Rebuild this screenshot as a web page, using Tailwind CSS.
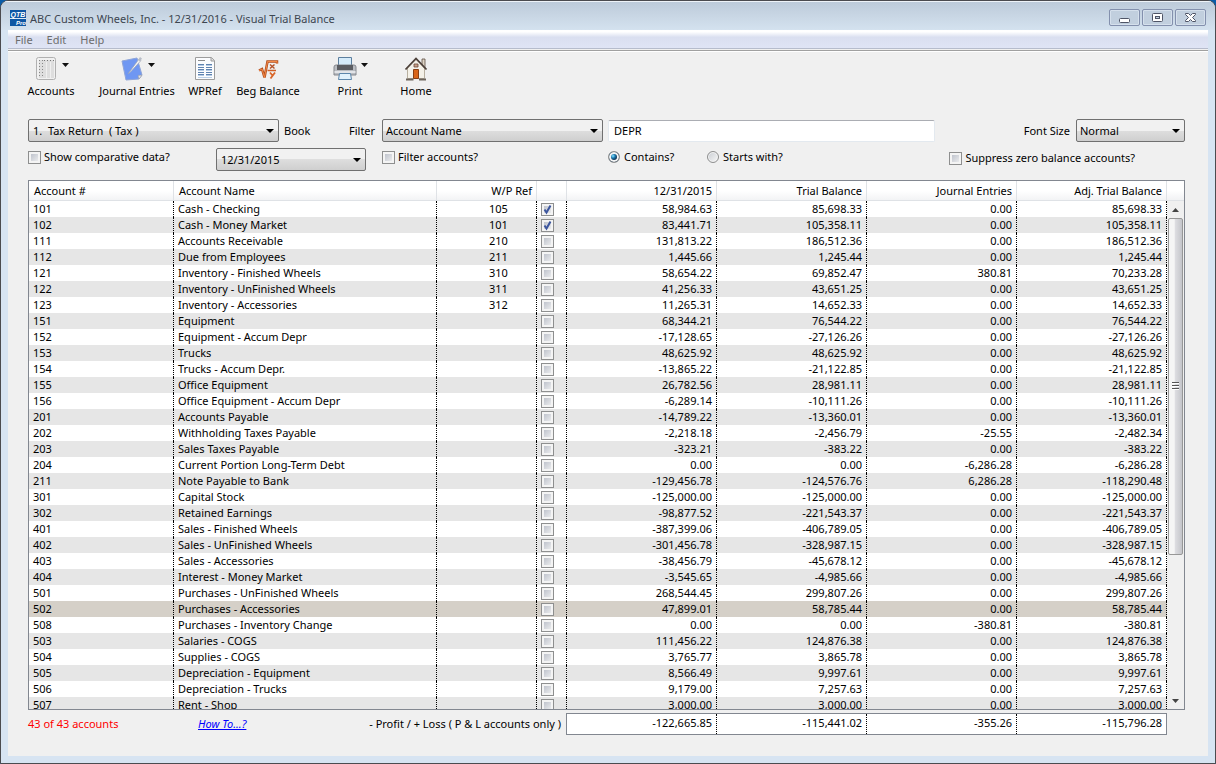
<!DOCTYPE html>
<html lang="en">
<head>
    <meta charset="UTF-8">
    <meta name="viewport" content="width=device-width, initial-scale=1.0">
    <title>ABC Custom Wheels, Inc. - 12/31/2016 - Visual Trial Balance</title>
    <script src="https://cdn.jsdelivr.net/npm/@tailwindcss/browser@4"></script>
</head>
<body class="bg-[#0a5ca8] font-['Noto_Sans','Open_Sans',sans-serif] text-[11px] leading-4 text-black">
    <div class="flex h-screen flex-col overflow-hidden rounded-t-lg border border-[#4b4b4f] bg-[#d7e4f2] px-[7px] pb-[7px]">
        <!-- Title bar -->
        <header class="-mx-[7px] flex h-[29px] shrink-0 items-center bg-linear-to-b from-[#bccad9] to-[#d4e2ef] pl-2 pr-[9px] shadow-[inset_0_1px_0_#eef3f8]">
            <svg class="ml-px mt-1 h-4 w-4 shrink-0" viewBox="0 0 16 16" role="img" aria-label="QTB Pro">
                <rect width="16" height="16" fill="#0d56a4"/>
                <rect y="8" width="16" height="1" fill="#dbe8f5"/>
                <text x="8" y="7" text-anchor="middle" font-family="Liberation Sans, sans-serif" font-size="7" font-weight="bold" font-style="italic" fill="#fff">QTB</text>
                <text x="11" y="15" text-anchor="middle" font-family="Liberation Sans, sans-serif" font-size="6" font-weight="bold" font-style="italic" fill="#fff">Pro</text>
            </svg>
            <h1 class="ml-1 mt-[6px] flex-1 text-[#3d4650]">ABC Custom Wheels, Inc. - 12/31/2016 - Visual Trial Balance</h1>
            <div class="mt-1 flex gap-[2px]">
                <button class="flex h-[17px] w-[31px] items-center justify-center rounded-xs border border-[#8390ad] bg-[#c1cfde] shadow-[inset_0_0_0_1px_#d5e0ec]" aria-label="Minimize">
                    <svg class="h-[13px] w-[13px]" viewBox="0 0 13 13"><rect x="1.5" y="7.5" width="10" height="4" rx="1" fill="#fff" stroke="#4f5566"/></svg>
                </button>
                <button class="flex h-[17px] w-[31px] items-center justify-center rounded-xs border border-[#8390ad] bg-[#c1cfde] shadow-[inset_0_0_0_1px_#d5e0ec]" aria-label="Restore">
                    <svg class="h-[13px] w-[13px]" viewBox="0 0 13 13"><rect x="1.5" y="2.5" width="10" height="8" rx="1" fill="#fff" stroke="#4f5566"/><rect x="4.5" y="5.5" width="4" height="2" fill="#c1cfde" stroke="#4f5566"/></svg>
                </button>
                <button class="flex h-[17px] w-[31px] items-center justify-center rounded-xs border border-[#8390ad] bg-[#c1cfde] shadow-[inset_0_0_0_1px_#d5e0ec]" aria-label="Close">
                    <svg class="h-[13px] w-[13px]" viewBox="0 0 13 13"><path d="M1.500 2.500h3l2 2 2-2h3v1L8.500 6.500l3 3v1h-3l-2-2-2 2h-3v-1l3-3-3-3z" fill="#fff" stroke="#4f5566"/></svg>
                </button>
            </div>
        </header>

        <main class="flex min-h-0 flex-1 flex-col bg-[#f0f0f0]">
            <nav class="flex h-[19px] shrink-0 items-center gap-[14px] border-b border-[#b6bccc] bg-linear-to-b from-white from-10% via-[#dadff0] via-40% to-[#dfe4f5] pl-[7px] pt-[2px] text-[#6d6d6d]">
                <button>File</button>
                <button>Edit</button>
                <button>Help</button>
            </nav>
            <div class="mt-px h-[2px] shrink-0 border-t border-[#a0a0a0] bg-white"></div>

            <!-- Toolbar -->
            <div class="flex h-[67px] shrink-0 pl-4 pt-1">
                <button class="flex w-[54px] flex-col items-center">
                    <span class="flex h-[27px] items-start gap-1">
                        <svg class="h-[26px] w-6" viewBox="0 0 24 26">
                            <rect x="2.500" y="1.500" width="19" height="22" rx="2" fill="#f1f1f1" stroke="#b0b0b0"/>
                            <rect x="5" y="4" width="15" height="18" fill="#dedede"/>
                            <path d="M5.500 4v18M8.500 4v18" stroke="#888" stroke-dasharray="1 2"/>
                            <path d="M10 4.500h10" stroke="#777" stroke-dasharray="1 2"/>
                            <path d="M12.500 6v16M16.500 6v16" stroke="#efefef"/>
                        </svg>
                        <svg class="mt-[7px] h-1 w-[7px]" viewBox="0 0 7 4"><path d="M0 0h7L3.500 4z" fill="#111"/></svg>
                    </span>
                    <span>Accounts</span>
                </button>
                <button class="ml-4 flex w-[86px] flex-col items-center">
                    <span class="flex h-[27px] items-start gap-1">
                        <svg class="h-[26px] w-6" viewBox="0 0 24 26">
                            <path d="M2 5l15-3 5 17-3 4-13 1z" fill="#6f97f2" stroke="#8fa5d8"/>
                            <path d="M19 23l3-4-4 .5z" fill="#e4e4e4" stroke="#999" stroke-width=".5"/>
                            <path d="M8 18L19 3l2 1.500L10.500 16z" fill="#f4f4f4" stroke="#9aa3b5" stroke-width=".7"/>
                            <path d="M18 4l2-3 2 1.500-2 3z" fill="#b9bec8"/>
                        </svg>
                        <svg class="mt-[7px] h-1 w-[7px]" viewBox="0 0 7 4"><path d="M0 0h7L3.500 4z" fill="#111"/></svg>
                    </span>
                    <span class="whitespace-nowrap">Journal Entries</span>
                </button>
                <button class="ml-1 flex w-[42px] flex-col items-center">
                    <span class="flex h-[27px] items-start">
                        <svg class="h-[26px] w-6" viewBox="0 0 24 26">
                            <path d="M2.500 1.500h16l3 3v19h-19z" fill="#fbfcfe" stroke="#9c9c9c"/>
                            <path d="M18 1.500v3.500h3.500" fill="#ddd" stroke="#9c9c9c"/>
                            <path d="M5 4.500h7" stroke="#8b8b8b"/>
                            <path d="M5 8.500h6M13 8.500h6M5 11.500h6M13 11.500h6M5 13.500h6M13 13.500h6M5 16.500h6M13 16.500h6M5 18.500h6M13 18.500h6" stroke="#5f83b0"/>
                            <path d="M5 9.500h6M13 9.500h6M5 14.500h6M13 14.500h6M5 19.500h6M13 19.500h6" stroke="#b4cbe4"/>
                            <path d="M5 21.500h14" stroke="#bcd0e6"/>
                        </svg>
                    </span>
                    <span>WPRef</span>
                </button>
                <button class="ml-1 flex w-[76px] flex-col items-center">
                    <span class="flex h-[27px] items-start">
                        <svg class="h-[26px] w-6" viewBox="0 0 24 26" fill="none">
                            <path d="M3 14.500l3-1.500 2.500 8.500 3-16H21v2" stroke="#b04d1e" stroke-width="2.500"/>
                            <path d="M3 14.500l3-1.500 2.500 8.500 3-16H21v2" stroke="#f58a48"/>
                            <path d="M14 8.500l4.500 4M18.500 8.500l-4.500 4" stroke="#b5532a" stroke-width="1.500"/>
                            <path d="M11.500 14.500h8.500" stroke="#cf5f27" stroke-width="1.500"/>
                            <path d="M14 16.500l2.500 3M19 16.500l-4.500 6" stroke="#d9662a" stroke-width="1.800"/>
                        </svg>
                    </span>
                    <span class="whitespace-nowrap">Beg Balance</span>
                </button>
                <button class="ml-4 flex w-14 flex-col items-center">
                    <span class="flex h-[27px] items-start gap-1">
                        <svg class="h-[26px] w-6" viewBox="0 0 24 26">
                            <path d="M5.500 1.500h13v9h-13z" fill="#d5ebfa" stroke="#5c7f9e"/>
                            <path d="M1 11q0-2 2-2h18q2 0 2 2v8H1z" fill="#b9bcc1" stroke="#85888e"/>
                            <path d="M4 9h16v5H4z" fill="#5b5d62"/>
                            <path d="M1.500 15h21v2h-21z" fill="#e2e4e8"/>
                            <path d="M6.500 17.500h11l1 6h-13z" fill="#e1f1fc" stroke="#5c86ab"/>
                        </svg>
                        <svg class="mt-[7px] h-1 w-[7px]" viewBox="0 0 7 4"><path d="M0 0h7L3.500 4z" fill="#111"/></svg>
                    </span>
                    <span>Print</span>
                </button>
                <button class="ml-[10px] flex w-14 flex-col items-center">
                    <span class="flex h-[27px] items-start">
                        <svg class="h-[26px] w-6" viewBox="0 0 24 26">
                            <path d="M18 3h3v9h-3z" fill="#ddd3c4" stroke="#5a4b40" stroke-width=".8"/>
                            <path d="M3.500 12L12 3.500l8.500 8.500v10.500h-17z" fill="#f4f1e8" stroke="#b8b0a0"/>
                            <path d="M1.500 13.500L12 2.500l10.500 11" fill="none" stroke="#4c4039" stroke-width="1.800"/>
                            <path d="M10 8h4v3h-4z" fill="#c9a08a" stroke="#6b4a38" stroke-width=".8"/>
                            <path d="M9.500 13.500h5v9h-5z" fill="#d96518" stroke="#8a3f12"/>
                            <path d="M2 23.500h7.500M15 23.500h7" stroke="#6b625a" stroke-width="2"/>
                        </svg>
                    </span>
                    <span>Home</span>
                </button>
            </div>

            <!-- Filters -->
            <form class="shrink-0 pl-5 pr-[23px]">
                <div class="flex h-[23px] items-center">
                    <select id="book" class="h-[23px] w-[251px] appearance-none rounded-xs border border-[#707070] bg-linear-to-b from-[#f1f1f1] from-50% via-[#dedede] via-50% to-[#cfcfcf] px-1">
                        <option>1.&nbsp; Tax Return&nbsp; ( Tax )</option>
                    </select>
                    <svg class="pointer-events-none -ml-[13px] mr-[5px] h-1 w-2 shrink-0" viewBox="0 0 8 4"><path d="M0 0h8L4 4z"/></svg>
                    <label for="book" class="ml-[5px] w-[65px]">Book</label>
                    <label for="field" class="w-[33px]">Filter</label>
                    <select id="field" class="h-[23px] w-[221px] appearance-none rounded-xs border border-[#707070] bg-linear-to-b from-[#f1f1f1] from-50% via-[#dedede] via-50% to-[#cfcfcf] px-[3px]">
                        <option>Account Name</option>
                    </select>
                    <svg class="pointer-events-none -ml-[13px] mr-[5px] h-1 w-2 shrink-0" viewBox="0 0 8 4"><path d="M0 0h8L4 4z"/></svg>
                    <input type="text" value="DEPR" aria-label="Filter text" class="ml-[5px] h-[22px] w-[327px] rounded-xs border border-[#e3e9ef] border-t-[#abadb3] bg-white px-[5px]">
                    <label for="fontsize" class="ml-auto mr-[6px]">Font Size</label>
                    <select id="fontsize" class="h-[23px] w-[109px] appearance-none rounded-xs border border-[#707070] bg-linear-to-b from-[#f1f1f1] from-50% via-[#dedede] via-50% to-[#cfcfcf] px-[3px]">
                        <option>Normal</option>
                    </select>
                    <svg class="pointer-events-none -ml-[13px] mr-[5px] h-1 w-2 shrink-0" viewBox="0 0 8 4"><path d="M0 0h8L4 4z"/></svg>
                </div>
                <div class="mt-[6px] flex h-8 items-start">
                    <label class="flex h-[18px] w-[188px] items-center gap-[3px]">
                        <input type="checkbox" class="h-[13px] w-[13px] appearance-none border border-[#8e8f8f] bg-linear-to-br from-[#b4b9c4] to-[#f6f6f6] shadow-[inset_0_0_0_2px_#f4f4f4]">
                        Show comparative data?
                    </label>
                    <select aria-label="Comparative date" class="h-[23px] w-[150px] appearance-none rounded-xs border border-[#707070] bg-linear-to-b from-[#f1f1f1] from-50% via-[#dedede] via-50% to-[#cfcfcf] px-1">
                        <option>12/31/2015</option>
                    </select>
                    <svg class="pointer-events-none -ml-[13px] mr-[5px] mt-[10px] h-1 w-2 shrink-0" viewBox="0 0 8 4"><path d="M0 0h8L4 4z"/></svg>
                    <label class="ml-4 flex h-[18px] w-[226px] items-center gap-[3px]">
                        <input type="checkbox" class="h-[13px] w-[13px] appearance-none border border-[#8e8f8f] bg-linear-to-br from-[#b4b9c4] to-[#f6f6f6] shadow-[inset_0_0_0_2px_#f4f4f4]">
                        Filter accounts?
                    </label>
                    <label class="flex h-[18px] w-[99px] items-center gap-1">
                        <input type="radio" name="match" checked class="h-3 w-3 appearance-none rounded-full border border-[#8e8f8f] bg-[#f4f4f4] checked:bg-radial-[at_40%_40%] checked:from-[#6fd0f5] checked:from-5% checked:via-[#1a76ab] checked:via-25% checked:to-[#0b2c4b] checked:to-50% checked:shadow-[inset_0_0_0_2px_#f4f4f4]">
                        Contains?
                    </label>
                    <label class="flex h-[18px] items-center gap-1">
                        <input type="radio" name="match" class="h-3 w-3 appearance-none rounded-full border border-[#8e8f8f] bg-linear-to-br from-[#c9cdd2] to-[#f8f8f8] shadow-[inset_0_0_0_1px_#f4f4f4]">
                        Starts with?
                    </label>
                    <label class="ml-auto mr-[50px] flex h-5 items-center gap-[3px]">
                        <input type="checkbox" class="h-[13px] w-[13px] appearance-none border border-[#8e8f8f] bg-linear-to-br from-[#b4b9c4] to-[#f6f6f6] shadow-[inset_0_0_0_2px_#f4f4f4]">
                        Suppress zero balance accounts?
                    </label>
                </div>
            </form>

            <!-- Accounts grid -->
            <div class="ml-5 mr-[23px] flex min-h-0 flex-1 border border-[#828790] bg-white">
                <div class="min-w-0 flex-1 overflow-hidden">
                    <table class="w-full table-fixed border-separate border-spacing-0">
                        <thead>
                            <tr class="h-5 bg-linear-to-b from-white from-50% to-[#f1f2f4] text-left">
                                <th class="w-[145px] border-r border-b border-[#dfe2e6] p-0 pl-[5px] font-normal">Account #</th>
                                <th class="border-r border-b border-[#dfe2e6] p-0 pl-[5px] font-normal">Account Name</th>
                                <th class="w-[100px] border-r border-b border-[#dfe2e6] p-0 pr-1 text-right font-normal">W/P Ref</th>
                                <th class="w-[30px] border-r border-b border-[#dfe2e6] p-0"></th>
                                <th class="w-[150px] border-r border-b border-[#dfe2e6] p-0 pr-1 text-right font-normal">12/31/2015</th>
                                <th class="w-[150px] border-r border-b border-[#dfe2e6] p-0 pr-1 text-right font-normal">Trial Balance</th>
                                <th class="w-[150px] border-r border-b border-[#dfe2e6] p-0 pr-1 text-right font-normal">Journal Entries</th>
                                <th class="w-[150px] border-r border-b border-[#dfe2e6] p-0 pr-1 text-right font-normal">Adj. Trial Balance</th>
                            </tr>
                        </thead>
                        <tbody id="accounts"></tbody>
                    </table>
                </div>
                <div class="flex w-[17px] flex-col bg-[#f0f0f0]">
                    <div class="h-5 border-b border-[#dfe2e6] bg-linear-to-b from-white from-50% to-[#f1f2f4]"></div>
                    <button class="flex h-[17px] items-center justify-center" aria-label="Scroll up">
                        <svg class="h-1 w-[7px]" viewBox="0 0 7 4"><path d="M0 4h7L3.500 0z" fill="#444"/></svg>
                    </button>
                    <div class="flex-1">
                        <div class="mx-px flex h-[71%] flex-col items-center justify-center gap-px rounded-xs border border-[#979797] bg-linear-to-r from-[#f5f5f5] from-40% via-[#dcdce0] via-50% to-[#c4c5ca]">
                            <span class="h-[2px] w-[7px] border-t border-[#555] bg-white"></span>
                            <span class="h-[2px] w-[7px] border-t border-[#555] bg-white"></span>
                            <span class="h-[2px] w-[7px] border-t border-[#555] bg-white"></span>
                        </div>
                    </div>
                    <button class="flex h-[17px] items-center justify-center" aria-label="Scroll down">
                        <svg class="h-1 w-[7px]" viewBox="0 0 7 4"><path d="M0 0h7L3.500 4z" fill="#444"/></svg>
                    </button>
                </div>
            </div>

            <!-- Totals -->
            <footer class="mb-[21px] ml-5 mr-[23px] mt-[3px] flex h-[22px] shrink-0 items-center">
                <span class="w-[170px] text-[#ff0000]">43 of 43 accounts</span>
                <a href="#" class="text-[#0000ff] italic underline">How To...?</a>
                <span class="ml-auto mr-[5px]">- Profit / + Loss ( P &amp; L accounts only )</span>
                <div class="mr-[18px] flex h-[22px] w-[601px] border border-[#828790] bg-white text-right leading-[18px]">
                    <span class="w-[150px] border-r border-dotted border-black pr-1">-122,665.85</span>
                    <span class="w-[150px] border-r border-dotted border-black pr-1">-115,441.02</span>
                    <span class="w-[150px] border-r border-dotted border-black pr-1">-355.26</span>
                    <span class="flex-1 pr-1">-115,796.28</span>
                </div>
            </footer>
        </main>
    </div>

    <script>
        // number, name, w/p ref, prior year, trial balance, journal entries, adjusted
        const accounts = [
            ['101', 'Cash - Checking', '105', '58,984.63', '85,698.33', '0.00', '85,698.33'],
            ['102', 'Cash - Money Market', '101', '83,441.71', '105,358.11', '0.00', '105,358.11'],
            ['111', 'Accounts Receivable', '210', '131,813.22', '186,512.36', '0.00', '186,512.36'],
            ['112', 'Due from Employees', '211', '1,445.66', '1,245.44', '0.00', '1,245.44'],
            ['121', 'Inventory - Finished Wheels', '310', '58,654.22', '69,852.47', '380.81', '70,233.28'],
            ['122', 'Inventory - UnFinished Wheels', '311', '41,256.33', '43,651.25', '0.00', '43,651.25'],
            ['123', 'Inventory - Accessories', '312', '11,265.31', '14,652.33', '0.00', '14,652.33'],
            ['151', 'Equipment', '', '68,344.21', '76,544.22', '0.00', '76,544.22'],
            ['152', 'Equipment - Accum Depr', '', '-17,128.65', '-27,126.26', '0.00', '-27,126.26'],
            ['153', 'Trucks', '', '48,625.92', '48,625.92', '0.00', '48,625.92'],
            ['154', 'Trucks - Accum Depr.', '', '-13,865.22', '-21,122.85', '0.00', '-21,122.85'],
            ['155', 'Office Equipment', '', '26,782.56', '28,981.11', '0.00', '28,981.11'],
            ['156', 'Office Equipment - Accum Depr', '', '-6,289.14', '-10,111.26', '0.00', '-10,111.26'],
            ['201', 'Accounts Payable', '', '-14,789.22', '-13,360.01', '0.00', '-13,360.01'],
            ['202', 'Withholding Taxes Payable', '', '-2,218.18', '-2,456.79', '-25.55', '-2,482.34'],
            ['203', 'Sales Taxes Payable', '', '-323.21', '-383.22', '0.00', '-383.22'],
            ['204', 'Current Portion Long-Term Debt', '', '0.00', '0.00', '-6,286.28', '-6,286.28'],
            ['211', 'Note Payable to Bank', '', '-129,456.78', '-124,576.76', '6,286.28', '-118,290.48'],
            ['301', 'Capital Stock', '', '-125,000.00', '-125,000.00', '0.00', '-125,000.00'],
            ['302', 'Retained Earnings', '', '-98,877.52', '-221,543.37', '0.00', '-221,543.37'],
            ['401', 'Sales - Finished Wheels', '', '-387,399.06', '-406,789.05', '0.00', '-406,789.05'],
            ['402', 'Sales - UnFinished Wheels', '', '-301,456.78', '-328,987.15', '0.00', '-328,987.15'],
            ['403', 'Sales - Accessories', '', '-38,456.79', '-45,678.12', '0.00', '-45,678.12'],
            ['404', 'Interest - Money Market', '', '-3,545.65', '-4,985.66', '0.00', '-4,985.66'],
            ['501', 'Purchases - UnFinished Wheels', '', '268,544.45', '299,807.26', '0.00', '299,807.26'],
            ['502', 'Purchases - Accessories', '', '47,899.01', '58,785.44', '0.00', '58,785.44'],
            ['508', 'Purchases - Inventory Change', '', '0.00', '0.00', '-380.81', '-380.81'],
            ['503', 'Salaries - COGS', '', '111,456.22', '124,876.38', '0.00', '124,876.38'],
            ['504', 'Supplies - COGS', '', '3,765.77', '3,865.78', '0.00', '3,865.78'],
            ['505', 'Depreciation - Equipment', '', '8,566.49', '9,997.61', '0.00', '9,997.61'],
            ['506', 'Depreciation - Trucks', '', '9,179.00', '7,257.63', '0.00', '7,257.63'],
            ['507', 'Rent - Shop', '', '3,000.00', '3,000.00', '0.00', '3,000.00']
        ];
        const checked = ['101', '102'];
        const selected = '502';

        document.getElementById('accounts').innerHTML = accounts.map(([number, name, ref, ...amounts]) => `
            <tr class="h-4 ${number === selected ? 'bg-[#d5d0c8]' : 'odd:bg-white even:bg-[#e6e6e6]'}">
                <td class="border-r border-dotted border-black p-0 pl-1">${number}</td>
                <td class="border-r border-dotted border-black p-0 pl-1">${name}</td>
                <td class="border-r border-dotted border-black p-0 pl-[52px]">${ref}</td>
                <td class="border-r border-dotted border-black p-0 pl-1">
                    <label class="relative block h-[13px] w-[13px]">
                        <input type="checkbox" aria-label="Reviewed ${number}" ${checked.includes(number) ? 'checked' : ''} class="peer block h-[13px] w-[13px] appearance-none border border-[#8e8f8f] bg-linear-to-br from-[#b4b9c4] to-[#f6f6f6] shadow-[inset_0_0_0_2px_#f4f4f4]">
                        <svg class="pointer-events-none absolute inset-0 hidden h-[13px] w-[13px] peer-checked:block" viewBox="0 0 13 13"><path d="M3.500 6.500l2 3 4-7" fill="none" stroke="#3c569e" stroke-width="2"/></svg>
                    </label>
                </td>
                ${amounts.map(amount => `<td class="border-r border-dotted border-black p-0 pr-1 text-right">${amount}</td>`).join('')}
            </tr>
        `).join('');
    </script>
</body>
</html>
